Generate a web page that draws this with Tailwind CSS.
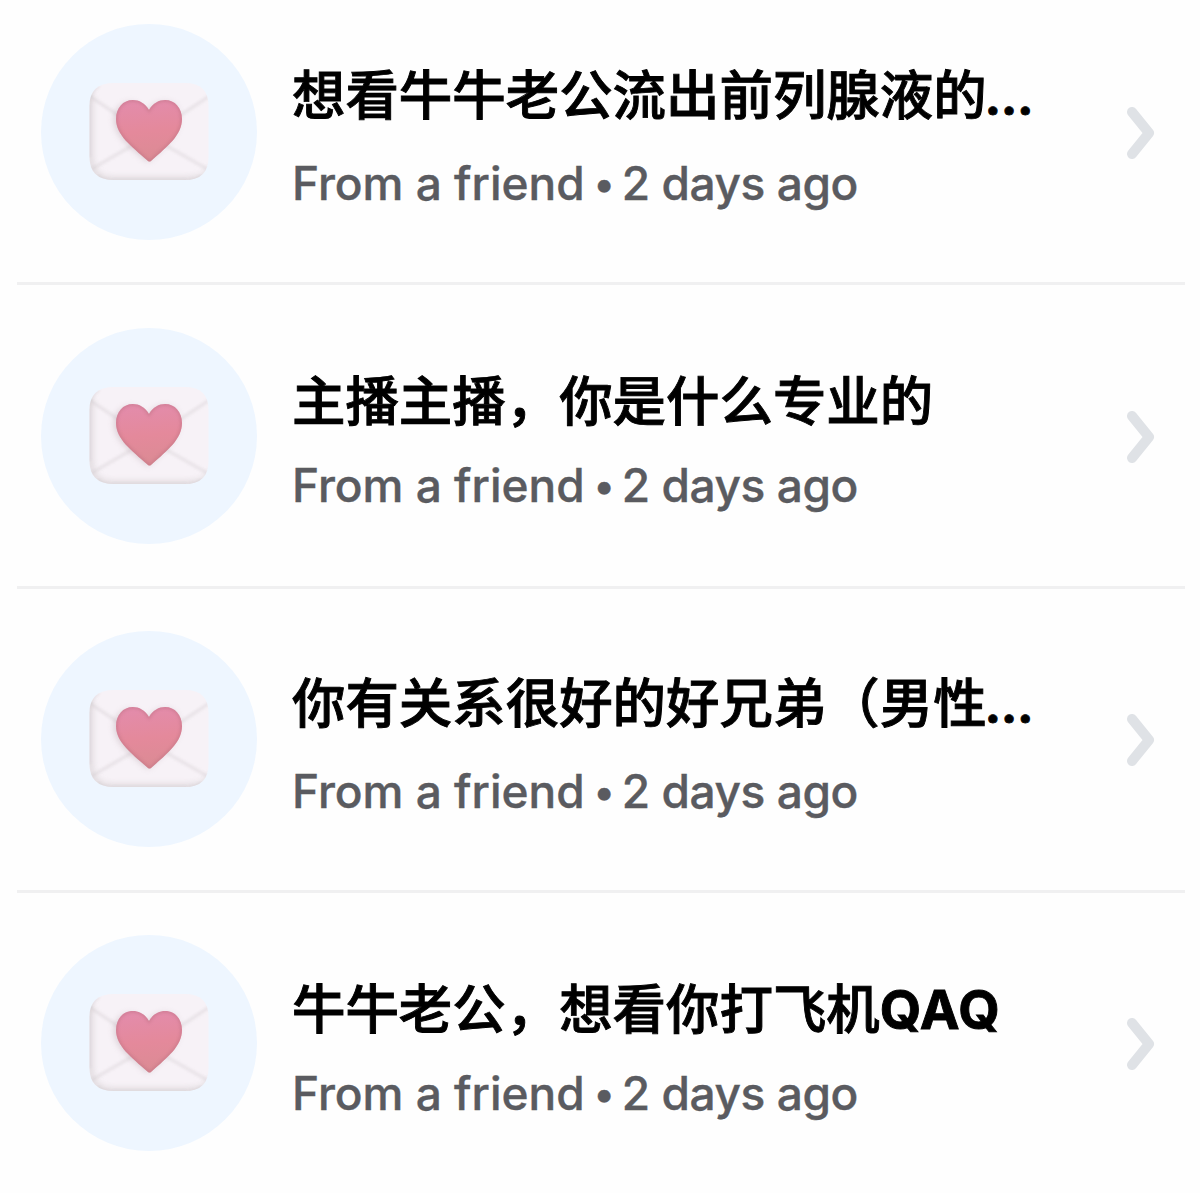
<!DOCTYPE html>
<html lang="zh-CN">
<head>
<meta charset="utf-8">
<title>Messages</title>
<script src="https://cdn.jsdelivr.net/npm/@tailwindcss/browser@4"></script>
</head>
<body class="bg-[#fefefe] h-[1193px] overflow-hidden">
<svg class="absolute w-0 h-0" aria-hidden="true">
  <defs>
    <linearGradient id="heartFill" x1="0.45" y1="0" x2="0.55" y2="1">
      <stop offset="0" stop-color="#e38cac"/><stop offset="0.5" stop-color="#e4899b"/><stop offset="1" stop-color="#da8b93"/>
    </linearGradient>
    <clipPath id="envClip"><path d="M48.500 82Q48.500 59 73 59H144Q167.500 59 167.500 82V133Q167.500 156 144 156H73Q48.500 156 48.500 133Z"/></clipPath>
    <clipPath id="heartClip"><path d="M108 86C112 79 118 76 124 76C134 76 141 84 141 95C141 111 127 122 110 137Q108.500 138.200 107 137C90 122 75 111 75 95C75 84 82 76 92 76C98 76 104 79 108 86Z"/></clipPath>
    <filter id="b1" x="-30%" y="-30%" width="160%" height="160%"><feGaussianBlur stdDeviation="1.5"/></filter>
    <filter id="b3" x="-30%" y="-30%" width="160%" height="160%"><feGaussianBlur stdDeviation="3"/></filter>
    <symbol id="letter" viewBox="0 0 216 216">
      <g clip-path="url(#envClip)">
        <rect x="48" y="58" width="120" height="99" fill="#f7f2f7"/>
        <path d="M47 71L108 112L170 71M49 146L92 121M168 146L124 121" fill="none" stroke="#dcd6da" stroke-width="2.500" opacity=".7" filter="url(#b1)"/>
        <path d="M49 70V133Q49 156 72 156H145Q168 156 168 145" fill="none" stroke="#cfc8ca" stroke-width="5" opacity=".7" filter="url(#b3)"/>
        <path d="M48 133V82Q48 68 58 62" fill="none" stroke="#cdc6ca" stroke-width="2" opacity=".6" filter="url(#b1)"/>
        <path d="M56 152Q62 157 72 157H145Q155 157 161 152" fill="none" stroke="#cfc9cc" stroke-width="2.500" opacity=".6" filter="url(#b1)"/>
      </g>
      <path d="M106 88C112 79 118 78 124 78C134 78 138 84 138 95C138 111 122 124 107 138C90 124 73 112 73 95C73 84 82 78 92 78Z" fill="#b9a5ad" opacity=".45" filter="url(#b3)"/>
      <g clip-path="url(#heartClip)">
        <rect x="74" y="75" width="69" height="64" fill="url(#heartFill)"/>
        <path d="M108 86C112 79 118 76 124 76C134 76 141 84 141 95C141 111 127 122 108.500 138C90 122 75 111 75 95C75 84 82 76 92 76C98 76 104 79 108 86Z" fill="none" stroke="#bf7283" stroke-width="3" opacity=".55" filter="url(#b1)"/>
      </g>
    </symbol>
    <symbol id="chevron" viewBox="0 0 30 54"><path d="M6 6L23 27L6 48" fill="none" stroke="#dfe2e6" stroke-width="10" stroke-linecap="round" stroke-linejoin="round"/></symbol>
  </defs>
</svg>
<main class="-mt-[18.5px] mx-[17px] w-[1168px] font-['Inter','Noto_Sans_CJK_SC',sans-serif]">
  <article class="flex h-[303.75px] items-center border-b-[3px] border-[#f0f0f1] pl-6 pr-[29px]">
    <div class="size-[216px] shrink-0 rounded-full bg-[#eef6ff]"><svg class="size-full"><use href="#letter"/></svg></div>
    <div class="ml-[35px] h-[216px] flex-1 whitespace-nowrap pt-[32.5px]">
      <h2 class="h-20 text-[53.45px] leading-[80px] font-medium text-black [-webkit-text-stroke:0.9px_#000]">想看牛牛老公流出前列腺液的<span class="-ml-[2px] text-[46px] font-extrabold">…</span></h2>
      <p class="mt-[17px] text-[46px] leading-[60px] font-medium text-[#5a5b60] [-webkit-text-stroke:0.4px_#5a5b60]">From a friend<span class="relative -top-[2px] text-[40px] tracking-[-1.9px]"> • </span><span class="tracking-[-0.4px]">2 days ago</span></p>
    </div>
    <svg class="h-[54px] w-[30px] shrink-0 mt-0.5"><use href="#chevron"/></svg>
  </article>
  <article class="flex h-[303.75px] items-center border-b-[3px] border-[#f0f0f1] pl-6 pr-[29px]">
    <div class="size-[216px] shrink-0 rounded-full bg-[#eef6ff]"><svg class="size-full"><use href="#letter"/></svg></div>
    <div class="ml-[35px] h-[216px] flex-1 whitespace-nowrap pt-[34.5px]">
      <h2 class="h-20 text-[53.45px] leading-[80px] font-medium text-black [-webkit-text-stroke:0.9px_#000]">主播主播，你是什么专业的</h2>
      <p class="mt-[13px] text-[46px] leading-[60px] font-medium text-[#5a5b60] [-webkit-text-stroke:0.4px_#5a5b60]">From a friend<span class="relative -top-[2px] text-[40px] tracking-[-1.9px]"> • </span><span class="tracking-[-0.4px]">2 days ago</span></p>
    </div>
    <svg class="h-[54px] w-[30px] shrink-0 mt-0.5"><use href="#chevron"/></svg>
  </article>
  <article class="flex h-[303.75px] items-center border-b-[3px] border-[#f0f0f1] pl-6 pr-[29px]">
    <div class="size-[216px] shrink-0 rounded-full bg-[#eef6ff]"><svg class="size-full"><use href="#letter"/></svg></div>
    <div class="ml-[35px] h-[216px] flex-1 whitespace-nowrap pt-[32.5px]">
      <h2 class="h-20 text-[53.45px] leading-[80px] font-medium text-black [-webkit-text-stroke:0.9px_#000]">你有关系很好的好兄弟（男性<span class="-ml-[2px] text-[46px] font-extrabold">…</span></h2>
      <p class="mt-[17px] text-[46px] leading-[60px] font-medium text-[#5a5b60] [-webkit-text-stroke:0.4px_#5a5b60]">From a friend<span class="relative -top-[2px] text-[40px] tracking-[-1.9px]"> • </span><span class="tracking-[-0.4px]">2 days ago</span></p>
    </div>
    <svg class="h-[54px] w-[30px] shrink-0 mt-0.5"><use href="#chevron"/></svg>
  </article>
  <article class="flex h-[303.75px] items-center border-b-[3px] border-transparent pl-6 pr-[29px]">
    <div class="size-[216px] shrink-0 rounded-full bg-[#eef6ff]"><svg class="size-full"><use href="#letter"/></svg></div>
    <div class="ml-[35px] h-[216px] flex-1 whitespace-nowrap pt-[35px]">
      <h2 class="h-20 text-[53.45px] leading-[80px] font-medium text-black [-webkit-text-stroke:0.9px_#000]">牛牛老公，想看你打飞机<span class="font-bold tracking-[0.7px]">QAQ</span></h2>
      <p class="mt-[12.5px] text-[46px] leading-[60px] font-medium text-[#5a5b60] [-webkit-text-stroke:0.4px_#5a5b60]">From a friend<span class="relative -top-[2px] text-[40px] tracking-[-1.9px]"> • </span><span class="tracking-[-0.4px]">2 days ago</span></p>
    </div>
    <svg class="h-[54px] w-[30px] shrink-0 mt-0.5"><use href="#chevron"/></svg>
  </article>
</main>
</body>
</html>
